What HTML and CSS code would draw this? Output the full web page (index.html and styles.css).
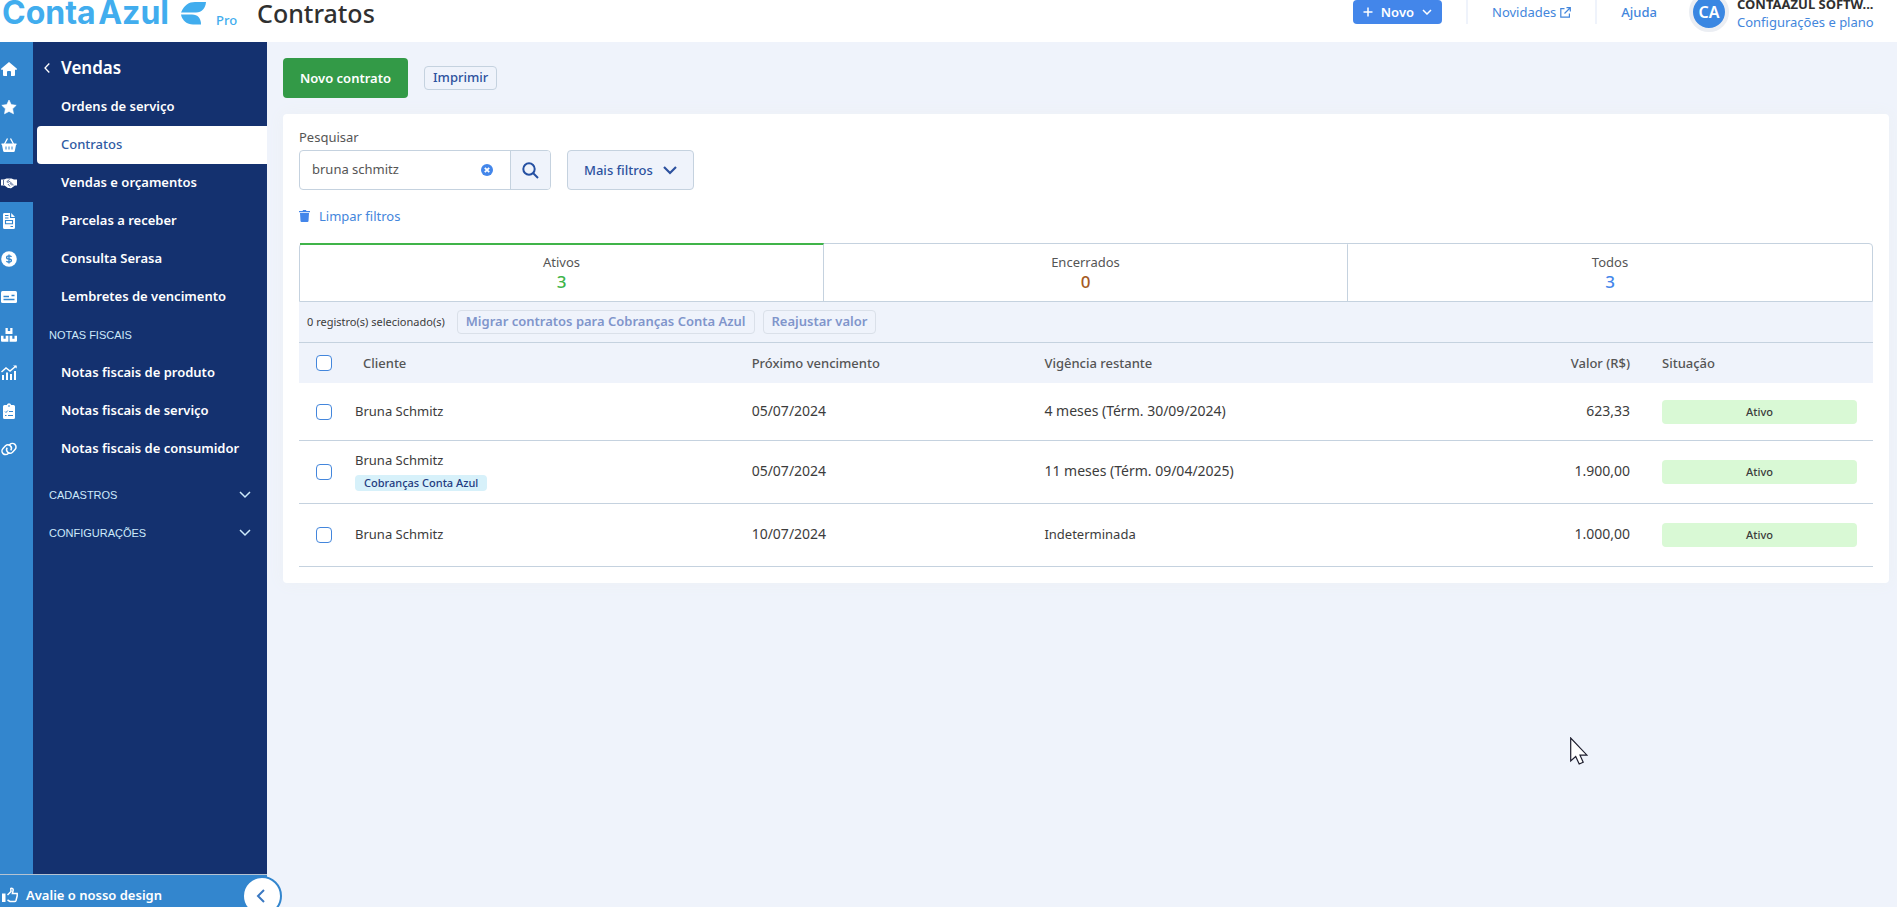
FILE: index.html
```
<!DOCTYPE html>
<html lang="pt-BR">
<head>
    <meta charset="UTF-8">
    <meta name="viewport" content="width=device-width, initial-scale=1.0">
    <title>Contratos - Conta Azul Pro</title>
    <link rel="stylesheet" href="styles.css">
</head>
<body>
    <header class="header">
        <a class="logo" href="#">
            <span class="logo-name">Conta&#8202;Azul</span>
            <svg width="25" height="23" viewBox="0 0 25 23" fill="#41adee"><path d="M0 10.500C3 3 8 0 14 0h11c-.5 6-4 10.500-10 10.500z"/><path d="M0 12.500h11c6 0 9 4 9 10h-8C6 22.500 1 18.500 0 12.500z"/></svg>
            <span class="logo-plan">Pro</span>
        </a>
        <h1>Contratos</h1>
        <div class="header-actions">
            <button class="btn-new" type="button">
                <svg width="10" height="10" viewBox="0 0 10 10" fill="none" stroke="#fff" stroke-width="1.5"><path d="M5 0.500v9M0.500 5h9"/></svg>
                Novo
                <svg width="10" height="6" viewBox="0 0 10 6" fill="none" stroke="#fff" stroke-width="1.5"><path d="M1 1l4 4 4-4"/></svg>
            </button>
            <a class="news" href="#">Novidades
                <svg width="11" height="11" viewBox="0 0 11 11" fill="none" stroke="#4386dc" stroke-width="1.2"><path d="M4.500 1.600H.8v8.600h8.600V6.500M6.500.7h3.800v3.800M10 1L4.500 6.500"/></svg>
            </a>
            <a class="help" href="#">Ajuda</a>
            <div class="account">
                <span class="avatar">CA</span>
                <div class="account-text">
                    <strong>CONTAAZUL SOFTW...</strong>
                    <a href="#">Configurações e plano</a>
                </div>
            </div>
        </div>
    </header>

    <div class="page">
        <aside class="sidebar">
            <div class="menus">
                <nav class="rail">
                    <a href="#" aria-label="Início"><svg viewBox="0 0 16 16"><path d="M8 1L.3 7.600c-.5.500-.2 1.200.4 1.200H2V14q0 1 1 1h3v-4q0-1 1-1h2q1 0 1 1v4h3q1 0 1-1V8.800h1.300c.6 0 .9-.7.4-1.200z"/></svg></a>
                    <a href="#" aria-label="Favoritos"><svg viewBox="0 0 16 16"><path d="M8 1l2.200 4.600 5 .7-3.600 3.500.9 5L8 12.400l-4.500 2.400.9-5L.8 6.300l5-.7z" stroke="#fff" stroke-linejoin="round" stroke-width=".6"/></svg></a>
                    <a href="#" aria-label="Compras"><svg viewBox="0 0 16 16"><path d="M.5 6.500h15V8H15l-1.200 6q-.2 1-1.200 1H3.400q-1 0-1.200-1L1 8H.5z"/><path d="M3.500 7l3-5.500M12.500 7l-3-5.500" stroke="#fff" stroke-width="1.300"/><path d="M5 9.500v3M8 9.500v3M11 9.500v3" stroke="#3386ce"/></svg></a>
                    <a class="active" href="#" aria-label="Vendas"><svg viewBox="0 0 16 16"><path d="M0 4.500h3l2.500-1h5l2.500 1h3v6h-2L10.500 13q-1 .6-2 0L7 13 3.500 10.500H0z"/><path d="M8.500 4.500L5.800 6.700q.8 1.500 3-.3l3.900 4M2.500 5v5M7 9l2 2.500M8.800 8l2.200 2.500" stroke="#14316f" stroke-width=".7" fill="none"/></svg></a>
                    <a href="#" aria-label="Financeiro"><svg viewBox="0 0 16 16"><path d="M3 0h6v5h5v9.500q0 1.500-1.500 1.500h-9Q2 16 2 14.500V1.500Q2 0 3 0zM10.200 0L14 4h-3.800z"/><path d="M4 2.500h3.500M4 5h3.500M4.500 7.500h7v3.300h-7zM9.500 13.500h2.500" stroke="#3386ce" stroke-width="1.100" fill="none"/></svg></a>
                    <a href="#" aria-label="Cobranças"><svg viewBox="0 0 16 16"><circle cx="8" cy="8" r="7.800"/><path d="M10.500 5.800Q9.800 4.900 8 4.900q-2.400 0-2.400 1.500T8 8t2.400 1.600T8 11.100q-1.900 0-2.600-1M8 3.400v9.200" stroke="#3386ce" stroke-width="1.300" fill="none"/></svg></a>
                    <a href="#" aria-label="Conta"><svg viewBox="0 0 16 16"><rect y="2" width="16" height="12" rx="1.500"/><path d="M2.500 7.500h5.500M2.500 10.500h11M10.500 6.500h3" stroke="#3386ce" stroke-width="1.400"/></svg></a>
                    <a href="#" aria-label="Estoque"><svg viewBox="0 0 16 16"><path d="M4.500 1h2.300v3h2.400V1h2.300v6h-7zM0 8.800h2.500v3h2.200v-3h2.700v6H1q-1 0-1-1zM8.600 8.800h2.700v3h2.200v-3H16v5q0 1-1 1H8.600z"/></svg></a>
                    <a href="#" aria-label="Relatórios"><svg viewBox="0 0 16 16"><path d="M.5 7L5 3l4 3 6-5" fill="none" stroke="#fff" stroke-width="1.500"/><path d="M12 .5h3.700v3M1 10h2v5H1zM5 7.500h2V15H5zM9 9h2v6H9zM13 6h2v9h-2z"/></svg></a>
                    <a href="#" aria-label="Tarefas"><svg viewBox="0 0 16 16"><path d="M3.500 2h2.300a2.300 2.300 0 0 1 4.400 0h2.300Q14 2 14 3.500v11q0 1.500-1.500 1.500h-9Q2 16 2 14.500v-11Q2 2 3.500 2z"/><path d="M4 8.500l1 1 1.800-2M8 8.500h4M4 12.500h1.500M7 12.500h5M7 3h2" stroke="#3386ce" fill="none"/></svg></a>
                    <a href="#" aria-label="Integrações"><svg viewBox="0 0 16 16"><g fill="none" stroke="#fff" stroke-width="1.500"><path d="M8.200 11.500l-1 1a3.600 3.600 0 0 1-5.200-5l2.500-2.700a3.500 3.500 0 0 1 5.300 4.500"/><path d="M7.800 4.500l1-1a3.600 3.600 0 0 1 5.200 5l-2.500 2.700a3.500 3.500 0 0 1-5.300-4.500"/></g></svg></a>
                </nav>
                <nav class="menu">
                    <a class="menu-title" href="#">
                        <svg width="6" height="10" viewBox="0 0 6 10" fill="none" stroke="#fff" stroke-width="1.300"><path d="M5.300.5L1 5l4.300 4.500"/></svg>
                        Vendas
                    </a>
                    <a class="menu-item" href="#">Ordens de serviço</a>
                    <a class="menu-item active" href="#">Contratos</a>
                    <a class="menu-item" href="#">Vendas e orçamentos</a>
                    <a class="menu-item" href="#">Parcelas a receber</a>
                    <a class="menu-item" href="#">Consulta Serasa</a>
                    <a class="menu-item" href="#">Lembretes de vencimento</a>
                    <div class="menu-group">NOTAS FISCAIS</div>
                    <a class="menu-item" href="#">Notas fiscais de produto</a>
                    <a class="menu-item" href="#">Notas fiscais de serviço</a>
                    <a class="menu-item" href="#">Notas fiscais de consumidor</a>
                    <div class="menu-more">
                        <button class="menu-group" type="button">CADASTROS
                            <svg width="12" height="8" viewBox="0 0 12 8" fill="none" stroke="#cdeafb" stroke-width="1.500"><path d="M1 1l5 5 5-5"/></svg>
                        </button>
                        <button class="menu-group" type="button">CONFIGURAÇÕES
                            <svg width="12" height="8" viewBox="0 0 12 8" fill="none" stroke="#cdeafb" stroke-width="1.500"><path d="M1 1l5 5 5-5"/></svg>
                        </button>
                    </div>
                </nav>
            </div>
            <div class="feedback">
                <a href="#">
                    <svg width="16" height="16" viewBox="0 0 16 16" fill="none" stroke="#fff" stroke-width="1.500"><path d="M0 6.500h3.500V15H0z" fill="#fff" stroke="none"/><path d="M5.500 8L9 4.500 8.800 1.500q2.400-.6 2.400 1.500l-.8 3.500h4.800v2.300l-1.200 4.700q-.3 1-1.500 1H8L5.500 13"/></svg>
                    Avalie o nosso design
                </a>
                <button class="collapse" type="button" aria-label="Recolher menu">
                    <svg width="9" height="14" viewBox="0 0 9 14" fill="none" stroke="#3a78c2" stroke-width="2"><path d="M8 1L2 7l6 6"/></svg>
                </button>
            </div>
        </aside>

        <main class="content">
            <div class="page-actions">
                <button class="btn-primary" type="button">Novo contrato</button>
                <button class="btn-small" type="button">Imprimir</button>
            </div>

            <section class="card">
                <label class="search-label" for="search">Pesquisar</label>
                <div class="filters">
                    <div class="search">
                        <input type="text" id="search" value="bruna schmitz">
                        <button class="clear" type="button" aria-label="Limpar pesquisa">
                            <svg width="12" height="12" viewBox="0 0 12 12"><circle cx="6" cy="6" r="6" fill="#4386ea"/><path d="M3.800 3.800l4.400 4.400M8.200 3.800L3.800 8.200" stroke="#fff" stroke-width="1.800"/></svg>
                        </button>
                        <button class="search-btn" type="button" aria-label="Pesquisar">
                            <svg width="17" height="17" viewBox="0 0 17 17" fill="none" stroke="#2550a2" stroke-width="2"><circle cx="7" cy="7" r="5.700"/><path d="M11 11l5 5"/></svg>
                        </button>
                    </div>
                    <button class="more-filters" type="button">Mais filtros
                        <svg width="14" height="9" viewBox="0 0 14 9" fill="none" stroke="#2c519e" stroke-width="2.200"><path d="M1 1l6 6 6-6"/></svg>
                    </button>
                </div>
                <a class="clear-filters" href="#">
                    <svg width="11" height="12" viewBox="0 0 11 12" fill="#4386ea"><path d="M0 1h3.500l.6-1h2.800l.6 1H11v1.200H0zM1 3h9l-.5 8q-.1 1-1 1h-6q-.9 0-1-1z"/></svg>
                    Limpar filtros
                </a>

                <div class="tabs">
                    <button class="tab green selected" type="button">Ativos<span>3</span></button>
                    <button class="tab brown" type="button">Encerrados<span>0</span></button>
                    <button class="tab blue" type="button">Todos<span>3</span></button>
                </div>

                <div class="toolbar">
                    <span>0 registro(s) selecionado(s)</span>
                    <button class="btn-small" type="button" disabled>Migrar contratos para Cobranças Conta Azul</button>
                    <button class="btn-small" type="button" disabled>Reajustar valor</button>
                </div>

                <table class="contracts">
                    <thead>
                        <tr>
                            <th class="col-check"><input type="checkbox" aria-label="Selecionar todos"></th>
                            <th class="col-client">Cliente</th>
                            <th class="col-date">Próximo vencimento</th>
                            <th>Vigência restante</th>
                            <th class="col-value">Valor (R$)</th>
                            <th class="col-status">Situação</th>
                        </tr>
                    </thead>
                    <tbody>
                        <tr class="first">
                            <td class="col-check"><input type="checkbox" aria-label="Selecionar contrato 1"></td>
                            <td>Bruna Schmitz</td>
                            <td class="col-date">05/07/2024</td>
                            <td class="col-term">4 meses (Térm. 30/09/2024)</td>
                            <td class="col-value">623,33</td>
                            <td class="col-status"><span class="status">Ativo</span></td>
                        </tr>
                        <tr>
                            <td class="col-check"><input type="checkbox" aria-label="Selecionar contrato 2"></td>
                            <td>Bruna Schmitz<br><span class="tag">Cobranças Conta Azul</span></td>
                            <td class="col-date">05/07/2024</td>
                            <td class="col-term">11 meses (Térm. 09/04/2025)</td>
                            <td class="col-value">1.900,00</td>
                            <td class="col-status"><span class="status">Ativo</span></td>
                        </tr>
                        <tr>
                            <td class="col-check"><input type="checkbox" aria-label="Selecionar contrato 3"></td>
                            <td>Bruna Schmitz</td>
                            <td class="col-date">10/07/2024</td>
                            <td>Indeterminada</td>
                            <td class="col-value">1.000,00</td>
                            <td class="col-status"><span class="status">Ativo</span></td>
                        </tr>
                    </tbody>
                </table>
            </section>
        </main>
    </div>

    <svg class="cursor" width="18" height="28" viewBox="0 0 18 28"><path d="M.7 1v23l5-4.500 3.500 7.500 4-1.800-3.200-7h7z" fill="#fff" stroke="#1e1e2e" stroke-width="1.200"/></svg>
</body>
</html>
```

FILE: styles.css
```
* {
    box-sizing: border-box;
}

body {
    display: flex;
    flex-direction: column;
    height: 100vh;
    margin: 0;
    overflow: hidden;
    background-color: #eff3fb;
    color: #3c3c3c;
    font-family: "Noto Sans", "Open Sans", sans-serif;
    font-size: 13px;
    line-height: 18px;
}

button,
input {
    margin: 0;
    font: inherit;
}

button {
    display: flex;
    align-items: center;
    cursor: pointer;
}

a {
    color: #4386dc;
    text-decoration: none;
}

svg {
    flex: none;
}

/* Header, scrolled slightly past the top of the window */
.header {
    display: flex;
    align-items: center;
    flex: none;
    height: 60px;
    margin-top: -18px;
    padding: 0 18px 0 2px;
    background: #fff;
}

.logo {
    display: flex;
    align-items: center;
    width: 255px;
    padding-top: 2px;
    color: #41adee;
}

.logo-name {
    width: 179px;
    font-family: Inter, sans-serif;
    font-size: 32px;
    font-weight: 700;
    line-height: 24px;
    white-space: nowrap;
}

.logo-plan {
    margin-left: 10px;
    padding-top: 13px;
    font-weight: 500;
}

.header h1 {
    margin: 0;
    padding-top: 2px;
    color: #303030;
    font-size: 25px;
    font-weight: 500;
    line-height: 24px;
}

.header-actions {
    display: flex;
    align-items: center;
    margin-left: auto;
}

.btn-new {
    gap: 8px;
    height: 24px;
    padding: 0 10px;
    border: 0;
    border-radius: 4px;
    background: #4386ea;
    color: #fff;
    font-weight: 600;
}

.news,
.help {
    display: flex;
    align-items: center;
    gap: 4px;
    height: 24px;
    margin-left: 24px;
    padding-left: 24px;
    border-left: 2px solid #eff3fb;
}

.help {
    font-weight: 500;
}

.account {
    display: flex;
    align-items: center;
    gap: 8px;
    margin-left: 32px;
}

.avatar {
    width: 40px;
    height: 40px;
    border: 4px solid #ebeef3;
    border-radius: 50%;
    background: #3a87e2;
    color: #fff;
    font-size: 16px;
    font-weight: 600;
    line-height: 32px;
    text-align: center;
}

.account-text {
    width: 142px;
    padding-top: 2px;
    white-space: nowrap;
}

.account-text strong,
.account-text a {
    display: block;
}

.account-text strong {
    color: #303030;
    font-weight: 700;
}

.page {
    display: flex;
    flex: 1;
    min-height: 0;
}

/* Sidebar */
.sidebar {
    display: flex;
    flex-direction: column;
    flex: none;
    width: 267px;
}

.menus {
    display: flex;
    flex: 1;
    min-height: 0;
}

.rail {
    width: 33px;
    padding-top: 8px;
    background: #3386ce;
}

.rail a {
    display: flex;
    align-items: center;
    height: 38px;
    padding-left: 1px;
}

.rail a.active {
    background: #14316f;
}

.rail svg {
    width: 16px;
    height: 16px;
    fill: #fff;
}

.menu {
    flex: 1;
    padding: 8px 0 0 4px;
    background: #14316f;
}

.menu-title,
.menu-item {
    display: flex;
    align-items: center;
    height: 38px;
    padding: 0 0 2px 24px;
    color: #fff;
    font-weight: 600;
}

.menu-title {
    gap: 11px;
    padding-left: 7px;
    font-size: 17px;
}

.menu-item.active {
    border-radius: 4px 0 0 4px;
    background: #fff;
    color: #2f5ba3;
    font-weight: 500;
}

.menu-group {
    display: flex;
    align-items: center;
    justify-content: space-between;
    width: 100%;
    height: 38px;
    padding: 0 16px 0 12px;
    border: 0;
    background: none;
    color: #cdeafb;
    font-family: "Liberation Sans", Arial, sans-serif;
    font-size: 11px;
}

.menu-more {
    padding-top: 8px;
}

.feedback {
    display: flex;
    align-items: center;
    justify-content: space-between;
    flex: none;
    height: 42px;
    margin-bottom: -9px;
    border-top: 1px solid #b5c3d2;
    background: #3386ce;
}

.feedback a {
    display: flex;
    align-items: center;
    gap: 8px;
    padding: 0 0 2px 2px;
    color: #fff;
    font-weight: 600;
}

.collapse {
    justify-content: center;
    width: 40px;
    height: 40px;
    margin-right: -15px;
    padding: 0 4px 0 0;
    border: 2px solid #3386ce;
    border-radius: 50%;
    background: #fff;
}

/* Content */
.content {
    flex: 1;
    padding: 16px 8px 0 16px;
}

.page-actions {
    display: flex;
    align-items: center;
    gap: 16px;
    margin-bottom: 16px;
}

.btn-primary {
    height: 40px;
    padding: 0 17px;
    border: 0;
    border-radius: 4px;
    background: #339a47;
    color: #fff;
    font-weight: 600;
}

.btn-small {
    height: 24px;
    padding: 0 8px 2px;
    border: 1px solid #c5d2df;
    border-radius: 4px;
    background: #eff3fb;
    color: #2c519e;
    font-weight: 500;
}

.btn-small:disabled {
    border-color: #dae0e9;
    color: #8095cb;
    cursor: default;
}

.card {
    padding: 14px 16px 16px;
    border-radius: 4px;
    background: #fff;
    box-shadow: 0 0 16px #ecf0f5;
}

.search-label {
    display: block;
    margin-bottom: 4px;
    color: #555;
}

.filters {
    display: flex;
    gap: 16px;
}

.search {
    display: flex;
    align-items: center;
    width: 252px;
    height: 40px;
    border: 1px solid #c5d2df;
    border-radius: 4px;
    overflow: hidden;
}

.search input {
    flex: 1;
    min-width: 0;
    padding: 0 12px 2px;
    border: 0;
    outline: 0;
    color: #555;
}

.clear {
    padding: 0 17px;
    border: 0;
    background: none;
}

.search-btn {
    justify-content: center;
    width: 40px;
    height: 100%;
    padding: 0;
    border: 0;
    border-left: 1px solid #c5d2df;
    background: #eff3fb;
}

.more-filters {
    gap: 10px;
    height: 40px;
    padding: 0 16px;
    border: 1px solid #c5d2df;
    border-radius: 4px;
    background: #eff3fb;
    color: #2c519e;
    font-weight: 500;
}

.clear-filters {
    display: inline-flex;
    align-items: center;
    gap: 9px;
    margin: 17px 0 18px;
}

.tabs {
    display: grid;
    grid-template-columns: repeat(3, 1fr);
    height: 59px;
    border: 1px solid #c5d2df;
    border-radius: 4px 4px 0 0;
}

.tab {
    flex-direction: column;
    justify-content: center;
    margin-top: -1px;
    padding: 0;
    border: 0;
    border-top: 2px solid transparent;
    border-right: 1px solid #c5d2df;
    background: none;
    color: #555;
}

.tab:last-child {
    border-right: 0;
}

.tab.selected {
    border-top-color: #40b449;
}

.tab span {
    font-size: 17px;
    font-weight: 500;
    line-height: 22px;
}

.green span {
    color: #40b449;
}

.brown span {
    color: #a55a23;
}

.blue span {
    color: #4386ea;
}

.toolbar {
    display: flex;
    align-items: center;
    gap: 8px;
    height: 41px;
    padding-left: 8px;
    border-bottom: 1px solid #c5d2df;
    background: #eff3fb;
    font-size: 11px;
}

.toolbar span {
    margin-right: 4px;
}

.toolbar .btn-small {
    font-size: 13px;
    font-weight: 600;
}

.contracts {
    width: 100%;
    border-collapse: separate;
    border-spacing: 0;
    table-layout: fixed;
}

.contracts th {
    height: 40px;
    padding: 0 8px;
    background: #eff3fb;
    color: #555;
    font-weight: 500;
    text-align: left;
}

.contracts td {
    height: 63px;
    padding: 0 8px 2px;
    border-bottom: 1px solid #c5d2df;
}

.contracts .first td {
    height: 58px;
}

.contracts .col-check {
    width: 48px;
    padding: 0 0 0 17px;
}

.contracts .col-client {
    width: 25.2%;
    padding-left: 16px;
}

.col-date {
    width: 18.6%;
}

.contracts .col-value {
    width: 160px;
    padding-right: 16px;
    text-align: right;
}

.contracts td.col-date,
.contracts td.col-term,
.contracts td.col-value {
    font-size: 14px;
}

.contracts .col-status {
    width: 227px;
    padding: 0 16px;
}

.contracts input {
    display: block;
    width: 16px;
    height: 16px;
    border: 1px solid #4386dc;
    border-radius: 4px;
    background: #fff;
    appearance: none;
}

.contracts input:checked {
    background: #4386dc;
}

.status {
    display: block;
    border-radius: 4px;
    background: #d9f9d5;
    font-size: 11px;
    font-weight: 500;
    line-height: 24px;
    text-align: center;
}

.tag {
    display: inline-block;
    margin-top: 6px;
    padding: 0 9px;
    border-radius: 4px;
    background: #d7f1fa;
    color: #1f3c80;
    font-size: 11px;
    font-weight: 500;
    line-height: 16px;
}

/* Mouse pointer over the page */
.cursor {
    position: absolute;
    top: 737px;
    left: 1570px;
}
```
